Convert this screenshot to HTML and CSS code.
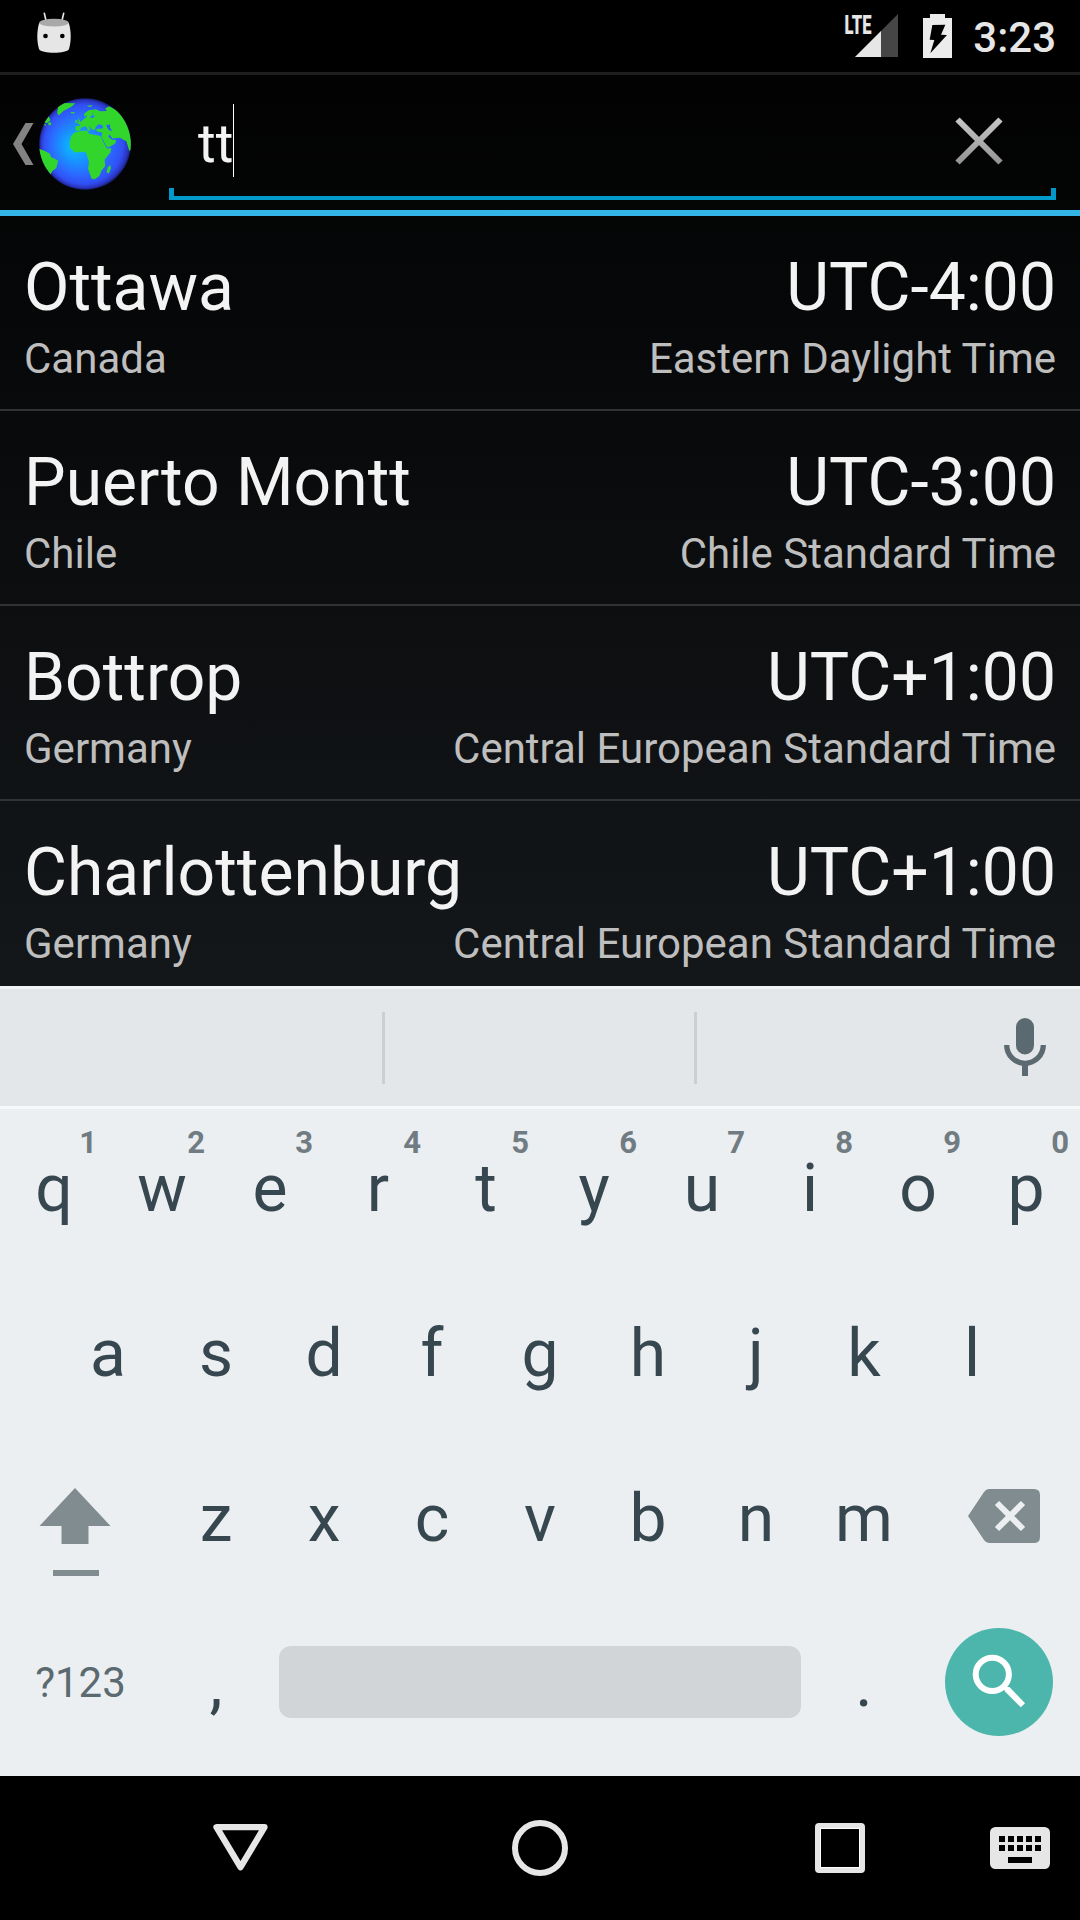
FILE: index.html
```html
<!DOCTYPE html>
<html lang="en">
<head>
<meta charset="utf-8">
<title>World Clock – City search</title>
<link rel="stylesheet" href="styles.css">
</head>
<body>
<div class="screen">
  <div class="status-bar">
    <svg class="debug-icon" width="34" height="41" viewBox="111 36 102 123">
      <path d="M133 40L139 66M191 40L185 66" stroke="#e6e6e6" stroke-width="5" stroke-linecap="round"/>
      <path d="M118 68C110 90 110 125 117 147C123 162 201 162 207 147C214 125 214 90 206 68Z" fill="#e6e6e6"/>
      <ellipse cx="162" cy="68" rx="44" ry="11.5" fill="#a9a9a9"/>
      <circle cx="136.500" cy="108" r="7"/><circle cx="187" cy="108" r="7"/>
    </svg>
    <div class="status-right">
      <svg class="signal" width="54" height="44" viewBox="0 0 54 44">
        <path d="M11 43L54 0V43Z" fill="#464646"/>
        <path d="M11 43L37 17V43Z" fill="#e6e6e6"/>
        <text class="lte" x="0.500" y="19.500" textLength="27" lengthAdjust="spacingAndGlyphs">LTE</text>
      </svg>
      <svg class="battery" width="29" height="44" viewBox="369 42 87 132">
        <path d="M390 42H435V54H456V174H369V54H390Z" fill="#ececec"/>
        <path d="M397 75L436 74L423 104L441 105L391 160L403 120L389 119Z" fill="#000"/>
      </svg>
      <span class="clock">3:23</span>
    </div>
  </div>

  <header class="action-bar">
    <svg class="up" width="21" height="42" viewBox="0 0 21 42"><path d="M0 21L12.500 0H20.500L8.500 21L20.500 42H12.500Z" fill="#838383"/></svg>
    <svg class="globe" width="92" height="92" viewBox="117 293 276 277">
      <defs>
        <radialGradient id="sea" gradientUnits="userSpaceOnUse" cx="255" cy="431.500" r="138" fx="216" fy="440">
          <stop offset="0" stop-color="#0cbcff"/><stop offset=".3" stop-color="#1599ff"/><stop offset=".65" stop-color="#2b6aff"/><stop offset=".86" stop-color="#3050f4"/><stop offset=".95" stop-color="#2a36c0"/><stop offset="1" stop-color="#171c70"/>
        </radialGradient>
        <clipPath id="disc"><circle cx="255" cy="431.500" r="138"/></clipPath>
      </defs>
      <circle cx="255" cy="431.500" r="138" fill="url(#sea)"/>
      <g fill="#32d52c" clip-path="url(#disc)">
        <path d="M213 408L222 398L242 392L262 391L267 401L292 405L302 408L310 426L321 445L334 444L332 456L314 479L316 498L305 511L298 528L284 538L275 536L264 506L267 485L262 470L258 458L250 455L225 457L210 443L209 425Z"/>
        <path d="M226 378L239 377L243 364L255 354L263 345L252 349L253 340L266 330L288 327L300 333L320 332L318 324L332 320L345 328L395 360V450L388 452L380 424L360 413L338 415L328 402L325 410L335 418L349 420L346 430L325 442L318 436L304 409L307 398L290 393L289 386L310 384L307 375L296 372L288 379L284 390L276 387L265 376L272 390L266 392L257 378L244 382L238 392L227 391Z"/>
        <path d="M186 308L226 309L214 319L190 332L176 346L171 337L174 320Z"/>
        <path d="M116 446L133 452L149 460L153 471L174 481L169 504L157 513L151 523L130 510Z"/>
        <path d="M146 348L151 360L140 369L132 366Z M130 373L138 371L136 377Z M144 367L153 366L153 374L145 375Z"/>
        <path d="M331 494L333 505L327 520L320 517L323 502Z M234 352L239 360L244 371L232 373L236 365Z M226 360L233 359L232 368L226 368Z M211 335L223 335L224 339L215 340Z M262 316L277 314L274 319H264Z M316 324L328 318L331 321L319 330Z"/>
      </g>
      <path d="M319 374L331 373L330 382L337 392L329 391L322 383Z" fill="#2462ff"/>
      <path d="M268 352L278 344L280 335L276 343L285 347L279 353Z" fill="#267cff"/>
    </svg>
    <div class="search-field">
      <span class="query">tt</span><span class="cursor"></span>
      <svg class="clear" width="50" height="50" viewBox="0 0 50 50">
        <defs><linearGradient id="cross" gradientUnits="userSpaceOnUse" x1="0" y1="0" x2="0" y2="50"><stop stop-color="#cacaca"/><stop offset="1" stop-color="#919191"/></linearGradient></defs>
        <path d="M3.500 3.500L46.500 46.500M46.500 3.500L3.500 46.500" stroke="url(#cross)" stroke-width="6"/>
      </svg>
    </div>
  </header>

  <main class="results">
    <div class="city"><div class="line name"><span>Ottawa</span><span>UTC-4:00</span></div><div class="line detail"><span>Canada</span><span>Eastern Daylight Time</span></div></div>
    <div class="city"><div class="line name"><span>Puerto Montt</span><span>UTC-3:00</span></div><div class="line detail"><span>Chile</span><span>Chile Standard Time</span></div></div>
    <div class="city"><div class="line name"><span>Bottrop</span><span>UTC+1:00</span></div><div class="line detail"><span>Germany</span><span>Central European Standard Time</span></div></div>
    <div class="city"><div class="line name"><span>Charlottenburg</span><span>UTC+1:00</span></div><div class="line detail"><span>Germany</span><span>Central European Standard Time</span></div></div>
  </main>

  <section class="keyboard">
    <div class="suggestions">
      <div class="slot slot-first"></div><div class="slot slot-mid"></div>
      <svg class="mic" width="42" height="58" viewBox="0 0 42 58">
        <rect x="12" y="0" width="18" height="36.500" rx="9" fill="#5b6a70"/>
        <path d="M2.700 27A18.300 18.300 0 0 0 39.300 27" fill="none" stroke="#5b6a70" stroke-width="5.300"/>
        <path d="M18 46H24V58H18Z" fill="#5b6a70"/>
      </svg>
    </div>
    <div class="keys">
      <div class="key-row">
        <div class="key">q<span class="hint">1</span></div><div class="key">w<span class="hint">2</span></div><div class="key">e<span class="hint">3</span></div><div class="key">r<span class="hint">4</span></div><div class="key">t<span class="hint">5</span></div><div class="key">y<span class="hint">6</span></div><div class="key">u<span class="hint">7</span></div><div class="key">i<span class="hint">8</span></div><div class="key">o<span class="hint">9</span></div><div class="key">p<span class="hint">0</span></div>
      </div>
      <div class="key-row">
        <div class="key">a</div><div class="key">s</div><div class="key">d</div><div class="key">f</div><div class="key">g</div><div class="key">h</div><div class="key">j</div><div class="key">k</div><div class="key">l</div>
      </div>
      <div class="key-row">
        <div class="key wide shift">
          <svg width="72" height="88" viewBox="0 0 72 88"><path d="M36 0L71.500 38H49.500V56H22.500V38H.500ZM14 82H60V88H14Z" fill="#818c90"/></svg>
        </div>
        <div class="key">z</div><div class="key">x</div><div class="key">c</div><div class="key">v</div><div class="key">b</div><div class="key">n</div><div class="key">m</div>
        <div class="key wide delete">
          <svg width="72" height="54" viewBox="0 0 72 54"><path d="M0 27L16 3Q18 0 21 0H66Q72 0 72 6V48Q72 54 66 54H21Q18 54 16 51Z" fill="#818c90"/><path d="M29 14L55 40M55 14L29 40" stroke="#eceff1" stroke-width="6"/></svg>
        </div>
      </div>
      <div class="key-row bottom">
        <div class="key wide symbols">?123</div><div class="key">,</div><div class="space"></div><div class="key">.</div>
        <div class="wide enter"><svg width="108" height="108" viewBox="0 0 108 108"><circle cx="54" cy="54" r="54" fill="#4db6ac"/><circle cx="47.300" cy="46.300" r="16.600" fill="none" stroke="#fff" stroke-width="6"/><path d="M58.500 59L64.500 59L80 75.200L75.800 79.300L60 63.500Z" fill="#fff"/></svg></div>
      </div>
    </div>
  </section>

  <nav class="nav-bar">
    <div class="nav-item"><svg width="60" height="60" viewBox="0 0 60 60"><path d="M6.500 9.200H54.500L30.500 49.200Z" fill="none" stroke="#e6e6e6" stroke-width="6.300" stroke-linejoin="round"/></svg></div>
    <div class="nav-item"><svg width="60" height="60" viewBox="0 0 60 60"><circle cx="30" cy="30" r="25" fill="none" stroke="#e6e6e6" stroke-width="6"/></svg></div>
    <div class="nav-item"><svg width="60" height="60" viewBox="0 0 60 60"><path d="M9 5H51A4 4 0 0 1 55 9V51A4 4 0 0 1 51 55H9A4 4 0 0 1 5 51V9A4 4 0 0 1 9 5ZM11 11V49H49V11Z" fill="#e6e6e6" fill-rule="evenodd"/><path d="M10.500 10.500H49.500V49.500H10.500Z" fill="none" stroke="#fff"/></svg></div>
    <svg width="60" height="42" viewBox="0 0 60 42"><rect width="60" height="42" rx="5.500" fill="#e6e6e6"/><path d="M9 9h6v6H9zM18 9h6v6h-6zM27 9h6v6h-6zM36 9h6v6h-6zM45 9h6v6h-6zM9 18h6v6H9zM18 18h6v6h-6zM27 18h6v6h-6zM36 18h6v6h-6zM45 18h6v6h-6zM18 30h24v6H18z"/></svg>
  </nav>
</div>
</body>
</html>
```
FILE: styles.css
```css
* { box-sizing: border-box; }
body { margin: 0; background: #000; font-family: Roboto, sans-serif; }
svg { display: block; flex: none; }

.screen {
  width: 1080px;
  height: 1920px;
  overflow: hidden;
  display: flex;
  flex-direction: column;
  background: linear-gradient(#000, #272d33);
}

.status-bar {
  height: 75px;
  flex: none;
  display: flex;
  justify-content: space-between;
  padding: 12px 24px 0 37px;
  background: #000;
  border-bottom: 3px solid #1e1e1e;
}
.status-right { display: flex; align-items: flex-start; padding-top: 2px; }
.signal { overflow: visible; }
.battery { margin-left: 25px; }
.lte { font-size: 26px; font-weight: 900; fill: #e6e6e6; }
.clock { margin-left: 21px; font-size: 42px; line-height: 48px; font-weight: 500; color: #e6e6e6; }

.action-bar {
  height: 141px;
  flex: none;
  display: flex;
  align-items: flex-start;
  padding-left: 13px;
  border-bottom: 6px solid #33b5e5;
}
.up { margin-top: 48px; }
.globe { margin: 23px 0 0 5px; }
.search-field {
  position: relative;
  width: 887px;
  height: 125px;
  margin-left: 38px;
  padding: 29px 52px 0 29px;
  display: flex;
  align-items: flex-start;
  border-bottom: 4px solid #0099cc;
}
.search-field::before,
.search-field::after {
  content: "";
  position: absolute;
  bottom: -4px;
  width: 5px;
  height: 12px;
  background: #0099cc;
}
.search-field::before { left: 0; }
.search-field::after { right: 0; }
.query { padding-top: 4px; font-size: 54px; line-height: 72px; color: #f3f3f3; }
.cursor { width: 1px; height: 73px; background: #fff; }
.clear { margin: 12px 0 0 auto; }

.results { height: 770px; flex: none; overflow: hidden; }
.city { height: 195px; padding: 33px 24px 0; border-bottom: 2px solid #303234; }
.line { display: flex; justify-content: space-between; white-space: nowrap; }
.name { font-size: 66px; line-height: 78px; color: #f3f3f3; }
.detail { margin-top: 7px; font-size: 42px; line-height: 50px; color: #bebebe; }

.keyboard { height: 790px; flex: none; background: #eceff1; color: #37474f; }
.suggestions {
  height: 123px;
  display: flex;
  align-items: center;
  background: #e4e7e9;
  border-top: 3px solid #f1f3f4;
  border-bottom: 3px solid #f6f8fa;
}
.slot { height: 72px; border-right: 3px solid #cbcfd1; }
.slot-first { width: 385px; }
.slot-mid { width: 312px; }
.mic { margin: 0 0 1px 307px; }

.keys { display: flex; flex-direction: column; }
.key-row { height: 165px; display: flex; justify-content: center; }
.key {
  position: relative;
  width: 108px;
  padding-top: 41px;
  font-size: 66px;
  line-height: 78px;
  text-align: center;
}
.wide { width: 162px; }
.hint {
  position: absolute;
  top: 16px;
  right: 11px;
  font-size: 31px;
  line-height: 36px;
  font-weight: 700;
  color: #707c82;
}
.shift { padding: 49px 0 0 39px; }
.delete { padding: 50px 0 0 50px; }
.symbols { font-size: 42px; padding: 54px 1px 0 0; line-height: 50px; color: #5b6a70; }
.space { width: 522px; height: 72px; margin: 42px 9px 0; border-radius: 12px; background: #d1d5d8; }
.enter { padding: 24px 0 0 27px; }

.nav-bar { height: 144px; flex: none; display: flex; align-items: center; padding-left: 90px; background: #000; }
.nav-item { width: 300px; display: flex; justify-content: center; }
```
